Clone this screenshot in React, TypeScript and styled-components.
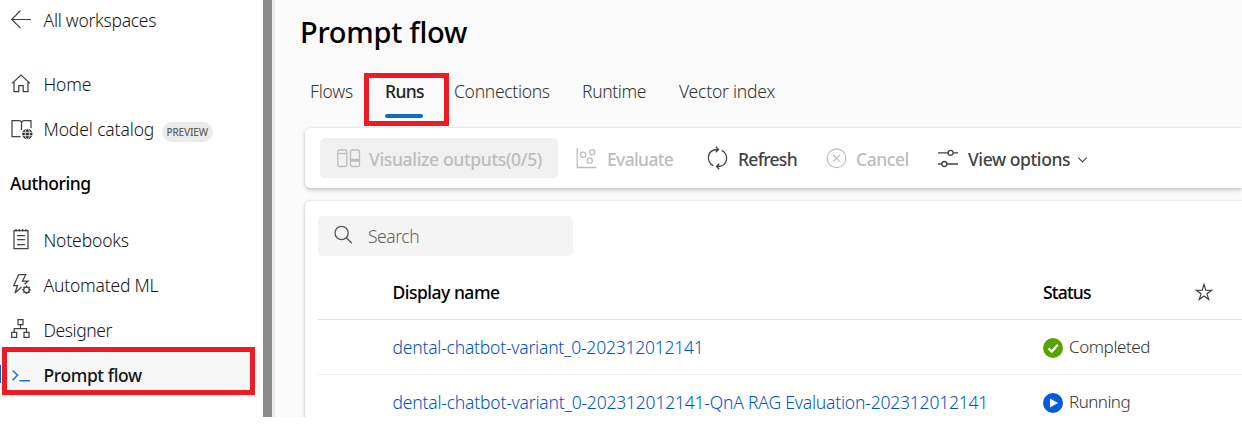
import React from 'react';
import styled, { createGlobalStyle } from 'styled-components';

const GlobalStyle = createGlobalStyle`
  * { box-sizing: border-box; }
  body { margin: 0; background: #fff; overflow: hidden; }
  button, input { font: inherit; border: 0; background: none; padding: 0; }
`;

const Screen = styled.div`
  display: flex;
  height: 417px;
  width: 1242px;
  overflow: hidden;
  font-family: 'Noto Sans', 'Open Sans', sans-serif;
  font-size: 17.5px;
  font-weight: 350;
  line-height: 24px;
  color: #161616;
  white-space: nowrap;
`;

const Label = styled.span<{ $ls?: number }>`
  letter-spacing: ${(p) => p.$ls ?? -0.4}px;
`;

const Sidebar = styled.nav`
  width: 263px;
  flex: none;
  background: #fff;
  padding-right: 3px;
`;

const NavItem = styled.a<{ $selected?: boolean }>`
  position: relative;
  display: flex;
  align-items: center;
  gap: 11.5px;
  height: 45px;
  padding-left: 10px;
  color: #161616;
  font-weight: ${(p) => (p.$selected ? 500 : 350)};
  background: ${(p) => (p.$selected ? '#f7f7f7' : 'transparent')};
`;

const BackItem = styled(NavItem)`
  height: 40px;
  margin-bottom: 21px;
`;

const NavHeading = styled.h2`
  display: flex;
  align-items: center;
  height: 66px;
  margin: 0;
  padding: 0 0 2px 10px;
  font-size: inherit;
  font-weight: 500;
  color: #000;
`;

const SelectedMark = styled.span`
  position: absolute;
  left: 0;
  top: 13px;
  width: 1px;
  height: 18px;
  background: #015cda;
`;

const Badge = styled.span`
  display: flex;
  align-items: center;
  justify-content: center;
  width: 51px;
  height: 20px;
  margin: 6px 0 0 -4px;
  border-radius: 10px;
  background: #ebebeb;
  color: #616161;
  font-size: 10px;
  font-weight: 500;
`;

const Highlight = styled.span<{ $x: number; $y: number; $w: number; $h: number }>`
  position: absolute;
  left: ${(p) => p.$x}px;
  top: ${(p) => p.$y}px;
  width: ${(p) => p.$w}px;
  height: ${(p) => p.$h}px;
  border: 5px solid #ed1c24;
  pointer-events: none;
`;

const Divider = styled.div`
  width: 12px;
  flex: none;
  background: #8a8a8a;
  border-right: 3px solid #ececec;
`;

const Main = styled.main`
  flex: 1;
  min-width: 0;
  background: #fafafa;
  padding-left: 30px;
`;

const Title = styled.h1`
  margin: 0 0 0 -5px;
  padding-top: 12px;
  height: 71px;
  font-size: 29px;
  line-height: 40px;
  font-weight: 500;
  color: #000;
`;

const Tabs = styled.div`
  display: flex;
  height: 57px;
  padding-left: 5px;
`;

const Tab = styled.div<{ $w: number; $active?: boolean }>`
  position: relative;
  width: ${(p) => p.$w}px;
  padding-top: 8px;
  color: ${(p) => (p.$active ? '#242424' : '#333')};
  font-weight: ${(p) => (p.$active ? 500 : 350)};
`;

const Underline = styled.div`
  width: 38px;
  height: 4px;
  margin-top: 11px;
  border-radius: 2px;
  background: #0f6cbd;
`;

const Card = styled.section`
  background: #fff;
  border-radius: 5px 0 0 5px;
  box-shadow: 0 2px 4px rgba(0, 0, 0, 0.2), 0 0 2px rgba(0, 0, 0, 0.14);
`;

const Toolbar = styled(Card)`
  display: flex;
  align-items: center;
  height: 60px;
  padding-left: 15px;
`;

const ToolButton = styled.button<{ $w: number; $gap: number; $disabled?: boolean; $filled?: boolean }>`
  display: flex;
  align-items: center;
  flex: none;
  gap: ${(p) => p.$gap}px;
  width: ${(p) => p.$w}px;
  height: 40px;
  padding-left: 17px;
  border-radius: 5px;
  font-weight: 500;
  color: ${(p) => (p.$disabled ? '#bdbdbd' : '#424242')};
  background: ${(p) => (p.$filled ? '#f0f0f0' : 'transparent')};

  ${Label} { padding-top: 2px; }
`;

const TableCard = styled(Card)`
  height: 260px;
  margin-top: 13px;
  padding: 15px 0 0 13px;
`;

const SearchBox = styled.div`
  display: flex;
  align-items: center;
  gap: 15px;
  width: 255px;
  height: 40px;
  padding-left: 15px;
  border-radius: 5px;
  background: #f4f4f4;
  color: #616161;
`;

const Row = styled.div<{ $head?: boolean }>`
  display: grid;
  grid-template-columns: 74.5px 650.5px 152px 1fr;
  align-items: center;
  height: ${(p) => (p.$head ? 64 : 55)}px;
  padding-top: ${(p) => (p.$head ? 9 : 0)}px;
  border-bottom: 1px solid ${(p) => (p.$head ? '#e3e3e3' : '#efefef')};
  font-weight: ${(p) => (p.$head ? 500 : 350)};
  color: #000;
`;

const RunLink = styled.a`
  color: #0052cc;
  padding-bottom: 1px;
`;

const Status = styled.span`
  display: flex;
  align-items: center;
  gap: 6px;
  font-size: 17px;
  color: #333;

  svg { margin-top: 1px; }
`;

const Svg = styled.svg`
  display: block;
  flex: none;
  fill: none;
  stroke: currentColor;
  overflow: visible;
`;

const NavIcon = ({ children, color = '#424242' }: { children: React.ReactNode; color?: string }) => (
  <Svg width="22" height="22" viewBox="0 0 22 22" color={color} strokeWidth="1.25">{children}</Svg>
);

const BackIcon = () => (
  <NavIcon><path d="M21 10.5H2M10.500 1.500L1.700 10.500l8.800 8.600" strokeWidth="1.150" /></NavIcon>
);
const HomeIcon = () => (
  <NavIcon><path d="M2 10.400L11 2l9 8.400M4 9v9.500h4.800v-6h4.400v6H18V9" /></NavIcon>
);
const CatalogIcon = () => (
  <NavIcon>
    <path d="M10.500 18.500H2V2.500h7q2 0 2.500 1.800Q12 2.500 14 2.500h7v7.500M11.500 4V12" />
    <circle cx="17.300" cy="16" r="5.200" fill="#333" stroke="none" />
    <path d="M12 14.300h10.500M12 17.700h10.500" stroke="#fff" strokeWidth=".8" />
    <ellipse cx="17.300" cy="16" rx="2.100" ry="5.200" stroke="#fff" strokeWidth=".8" />
  </NavIcon>
);
const NotebookIcon = () => (
  <NavIcon><path d="M4 1.500h14v18H4zM7 6.500h8M7 10.500h8M7 15.500h8M6 0v2.500M9.300 0v2.500M12.700 0v2.500M16 0v2.500" /></NavIcon>
);
const AutoMlIcon = () => (
  <NavIcon>
    <path d="M11.500 13L5 19l2.500-7.500H3.700L8.700 .7h7L12.500 7h5.500l-3.500 3.300" />
    <circle cx="16.500" cy="15.800" r="2.800" />
    <path d="M16.500 11.500v1.500M16.500 18.600v1.500M12.200 15.800h1.500M19.300 15.800h1.500M13.500 12.800l1 1M18.500 17.800l1 1M19.500 12.800l-1 1M14.500 17.800l-1 1" strokeWidth="1.500" />
  </NavIcon>
);
const DesignerIcon = () => (
  <NavIcon><path d="M8 .7h5v5H8zM1.700 13.300h5v5h-5zM14 13.300h5v5h-5zM10.500 6v4M4.200 13.300V9.500h12.300v3.800" /></NavIcon>
);
const PromptIcon = () => (
  <NavIcon color="#1a73c8"><path d="M2.700 6.500l4.800 4.800-4.800 4.800M9.500 16.800h10.500" strokeWidth="1.500" /></NavIcon>
);

const VisualizeIcon = () => (
  <Svg width="24" height="20" viewBox="0 0 24 20" strokeWidth="1.300">
    <rect x=".8" y="2" width="9" height="16.500" rx="1.800" />
    <path d="M.8 5.500h9" />
    <rect x="13.500" y="2" width="9" height="16.500" rx="1.800" />
    <path d="M13.500 12.300h9" strokeWidth="3" />
  </Svg>
);
const EvaluateIcon = () => (
  <Svg width="22" height="22" viewBox="0 0 22 22" strokeWidth="1.300">
    <path d="M2.200 1v19.500H21.500" />
    <circle cx="8.200" cy="7.700" r="2.600" />
    <circle cx="17.200" cy="5.200" r="2.600" />
    <circle cx="14.700" cy="13.700" r="2.600" />
  </Svg>
);
const RefreshIcon = () => (
  <Svg width="20" height="24" viewBox="0 0 20 24" strokeWidth="1.300">
    <path d="M6.300 19.700C-1 16 -.6 3.500 10.800 3.500M8.800.8l2.700 2.700-2.700 2.700M14.700 4.300C22 8 21.600 20.500 10.200 20.500M12.200 17.800l-2.700 2.700 2.700 2.700" />
  </Svg>
);
const CancelIcon = () => (
  <Svg width="22" height="22" viewBox="0 0 22 22" strokeWidth="1.200">
    <circle cx="10.500" cy="11.200" r="9.400" />
    <path d="M7 7.700l7 7M14 7.700l-7 7" />
  </Svg>
);
const OptionsIcon = () => (
  <Svg width="22" height="20" viewBox="0 0 22 20" strokeWidth="1.300">
    <path d="M1 4.800h10M16.200 4.800H21M1 16h3.700M9.900 16H21" />
    <circle cx="13.600" cy="4.800" r="2.500" />
    <circle cx="7.300" cy="16" r="2.500" />
  </Svg>
);
const ChevronIcon = () => (
  <Svg width="10" height="10" viewBox="0 0 10 10" strokeWidth="1.100"><path d="M-.7 4.700L3.500 8.900l4.200-4.200" /></Svg>
);
const SearchIcon = () => (
  <Svg width="20" height="20" viewBox="0 0 20 20" color="#565656" strokeWidth="1.300">
    <circle cx="8.600" cy="7" r="6.600" />
    <path d="M13.300 11.700l5.600 5.600" />
  </Svg>
);
const StarIcon = () => (
  <Svg width="18" height="18" viewBox="0 0 18 18" color="#333" strokeWidth="1.100">
    <path d="M9 1.300l1.700 6h5.900l-4.700 3.500 1.900 5.700L9 13l-4.800 3.500 1.900-5.700L1.400 7.300h5.900z" />
  </Svg>
);
const CompletedIcon = () => (
  <Svg width="20" height="20" viewBox="0 0 20 20">
    <circle cx="10" cy="10" r="10" fill="#57a300" stroke="none" />
    <path d="M5.500 10.300l3.300 3.300 6-6.800" stroke="#fff" strokeWidth="2.200" />
  </Svg>
);
const RunningIcon = () => (
  <Svg width="20" height="20" viewBox="0 0 20 20">
    <circle cx="10" cy="10" r="10" fill="#015cda" stroke="none" />
    <path d="M7 5.500v9l8-4.500z" fill="#fff" stroke="none" />
  </Svg>
);

export default function App() {
  return (
    <>
      <GlobalStyle />
      <Screen>
        <Sidebar>
          <BackItem><BackIcon /><Label $ls={-0.26}>All workspaces</Label></BackItem>
          <NavItem><HomeIcon /><Label $ls={-0.1}>Home</Label></NavItem>
          <NavItem>
            <CatalogIcon /><Label $ls={-0.12}>Model catalog</Label>
            <Badge><Label $ls={-0.2}>PREVIEW</Label></Badge>
          </NavItem>
          <NavHeading><Label $ls={-0.45}>Authoring</Label></NavHeading>
          <NavItem><NotebookIcon /><Label $ls={-0.14}>Notebooks</Label></NavItem>
          <NavItem><AutoMlIcon /><Label $ls={-0.2}>Automated ML</Label></NavItem>
          <NavItem><DesignerIcon /><Label $ls={-0.44}>Designer</Label></NavItem>
          <NavItem $selected>
            <SelectedMark />
            <PromptIcon /><Label>Prompt flow</Label>
            <Highlight $x={2} $y={-5} $w={253} $h={48} />
          </NavItem>
        </Sidebar>
        <Divider />
        <Main>
          <Title><Label $ls={-0.26}>Prompt flow</Label></Title>
          <Tabs>
            <Tab $w={75}><Label $ls={-0.2}>Flows</Label></Tab>
            <Tab $w={69} $active>
              <Label $ls={-0.65}>Runs</Label>
              <Underline />
              <Highlight $x={-21} $y={2} $w={85} $h={53} />
            </Tab>
            <Tab $w={128}><Label $ls={-0.3}>Connections</Label></Tab>
            <Tab $w={97}><Label $ls={-0.36}>Runtime</Label></Tab>
            <Tab $w={100}><Label $ls={-0.22}>Vector index</Label></Tab>
          </Tabs>
          <Toolbar>
            <ToolButton $w={238} $gap={8} $disabled $filled><VisualizeIcon /><Label $ls={-0.34}>Visualize outputs(0/5)</Label></ToolButton>
            <ToolButton $w={132} $gap={10} $disabled><EvaluateIcon /><Label $ls={-0.65}>Evaluate</Label></ToolButton>
            <ToolButton $w={119} $gap={11}><RefreshIcon /><Label $ls={-0.72}>Refresh</Label></ToolButton>
            <ToolButton $w={111} $gap={8} $disabled><CancelIcon /><Label $ls={-0.45}>Cancel</Label></ToolButton>
            <ToolButton $w={170} $gap={9}><OptionsIcon /><Label $ls={-0.41}>View options</Label><ChevronIcon /></ToolButton>
          </Toolbar>
          <TableCard>
            <SearchBox><SearchIcon /><Label $ls={-0.45}>Search</Label></SearchBox>
            <Row $head>
              <span /><Label $ls={-0.5}>Display name</Label><Label $ls={-0.8}>Status</Label><StarIcon />
            </Row>
            <Row>
              <span />
              <RunLink><Label $ls={-0.22}>dental-chatbot-variant_0-202312012141</Label></RunLink>
              <Status><CompletedIcon /><Label>Completed</Label></Status>
            </Row>
            <Row>
              <span />
              <RunLink><Label $ls={-0.2}>dental-chatbot-variant_0-202312012141-QnA RAG Evaluation-202312012141</Label></RunLink>
              <Status><RunningIcon /><Label $ls={-0.55}>Running</Label></Status>
            </Row>
          </TableCard>
        </Main>
      </Screen>
    </>
  );
}
